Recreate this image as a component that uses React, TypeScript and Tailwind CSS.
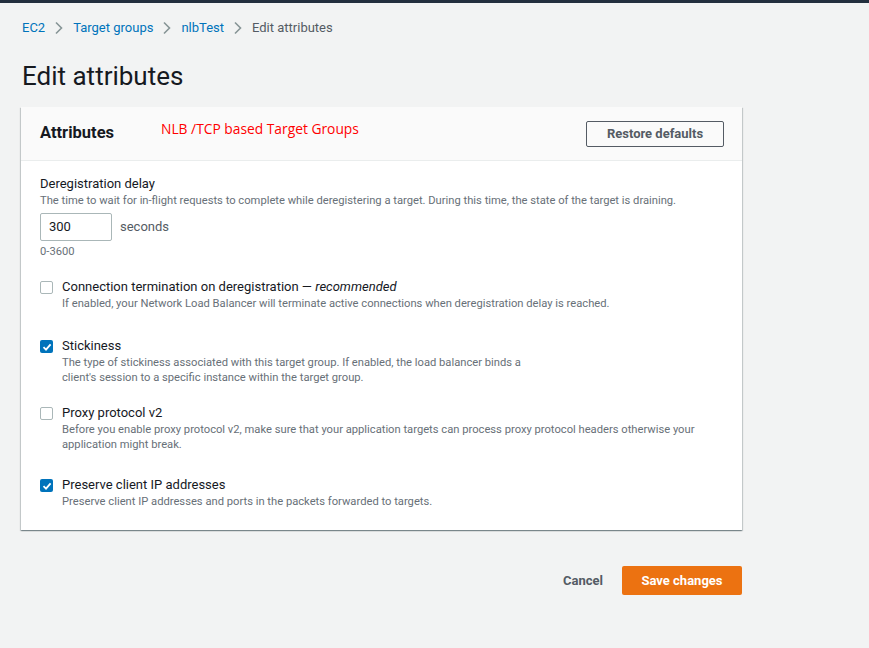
import React from "react";

const Chevron = () => (
  <svg width="10" height="14" viewBox="0 0 10 14" className="mx-[9px]">
    <path d="M2 1.5 L7.5 7 L2 12.5" fill="none" stroke="#879596" strokeWidth="1.6" />
  </svg>
);

const Check = ({ checked }: { checked: boolean }) =>
  checked ? (
    <div className="w-[13px] h-[13px] rounded-[2px] bg-[#0073bb] flex items-center justify-center shrink-0 mt-[3px]">
      <svg width="10" height="10" viewBox="0 0 10 10">
        <path d="M1.5 5.2 L4 7.6 L8.6 2.4" fill="none" stroke="white" strokeWidth="1.8" />
      </svg>
    </div>
  ) : (
    <div className="w-[13px] h-[13px] rounded-[2px] border border-[#aab7b8] bg-white shrink-0 mt-[3px]" />
  );

const Row = ({
  checked,
  label,
  desc,
}: {
  checked: boolean;
  label: React.ReactNode;
  desc: React.ReactNode;
}) => (
  <div className="flex gap-[9px]">
    <Check checked={checked} />
    <div>
      <div className="text-[13px] leading-[18px] text-[#16191f]">{label}</div>
      <div className="text-[11.2px] leading-[15px] text-[#687078]">{desc}</div>
    </div>
  </div>
);

export default function App() {
  return (
    <div
      className="min-h-[648px] bg-[#f2f3f3]"
      style={{ fontFamily: "Roboto, 'Liberation Sans', sans-serif" }}
    >
      <div className="h-[3px] bg-[#232f3e]" />
      <div className="px-[22px]">
        <div className="flex items-center h-[20px] mt-[15px] text-[13px]">
          <span className="text-[#0073bb]">EC2</span>
          <Chevron />
          <span className="text-[#0073bb]">Target groups</span>
          <Chevron />
          <span className="text-[#0073bb]">nlbTest</span>
          <Chevron />
          <span className="text-[#545b64]">Edit attributes</span>
        </div>
        <h1 className="text-[26px] leading-[30px] text-[#16191f] mt-[23px]">Edit attributes</h1>
      </div>
      <div className="ml-[21px] w-[721px] mt-[16px] bg-white shadow-[0_1px_1px_0_rgba(0,28,36,0.3),1px_1px_1px_0_rgba(0,28,36,0.15),-1px_1px_1px_0_rgba(0,28,36,0.15)]">
        <div className="h-[54px] bg-[#fafafa] border-b border-[#eaeded] flex items-center pl-[19px] pr-[18px]">
          <span className="text-[16.5px] font-bold text-[#16191f] w-[121px]">Attributes</span>
          <span
            className="text-[13.8px] text-[#ff0000] self-start mt-[12px]"
            style={{ fontFamily: "'Open Sans', sans-serif" }}
          >
            NLB /TCP based Target Groups
          </span>
          <div className="ml-auto border border-[#545b64] rounded-[2px] w-[138px] h-[26px] flex items-center justify-center text-[13px] font-bold text-[#545b64]">
            Restore defaults
          </div>
        </div>
        <div className="pl-[19px] pr-[20px] pt-[14px] pb-[21px]">
          <div className="text-[13px] leading-[18px] text-[#16191f]">Deregistration delay</div>
          <div className="text-[11.2px] leading-[15px] text-[#687078]">
            The time to wait for in-flight requests to complete while deregistering a target. During this time, the state of the target is draining.
          </div>
          <div className="flex items-center mt-[5px]">
            <div className="w-[72px] h-[28px] border border-[#aab7b8] rounded-[2px] flex items-center pl-[8px] text-[13px] text-[#16191f]">
              300
            </div>
            <span className="ml-[8px] text-[13px] text-[#545b64]">seconds</span>
          </div>
          <div className="text-[11.2px] leading-[15px] text-[#687078] mt-[3px]">0-3600</div>
          <div className="flex flex-col mt-[19px]">
            <Row
              checked={false}
              label={
                <>
                  Connection termination on deregistration — <i>recommended</i>
                </>
              }
              desc="If enabled, your Network Load Balancer will terminate active connections when deregistration delay is reached."
            />
            <div className="h-[26px]" />
            <Row
              checked={true}
              label="Stickiness"
              desc={
                <>
                  The type of stickiness associated with this target group. If enabled, the load balancer binds a
                  <br />
                  client's session to a specific instance within the target group.
                </>
              }
            />
            <div className="h-[19px]" />
            <Row
              checked={false}
              label="Proxy protocol v2"
              desc={
                <>
                  Before you enable proxy protocol v2, make sure that your application targets can process proxy protocol headers otherwise your
                  <br />
                  application might break.
                </>
              }
            />
            <div className="h-[24px]" />
            <Row
              checked={true}
              label="Preserve client IP addresses"
              desc="Preserve client IP addresses and ports in the packets forwarded to targets."
            />
          </div>
        </div>
      </div>
      <div className="w-[742px] flex justify-end items-center mt-[36px]">
        <span className="text-[13px] font-bold text-[#545b64] mr-[19px]">Cancel</span>
        <div className="w-[120px] h-[29px] bg-[#ec7211] rounded-[2px] flex items-center justify-center text-[13px] font-bold text-white">
          Save changes
        </div>
      </div>
    </div>
  );
}
